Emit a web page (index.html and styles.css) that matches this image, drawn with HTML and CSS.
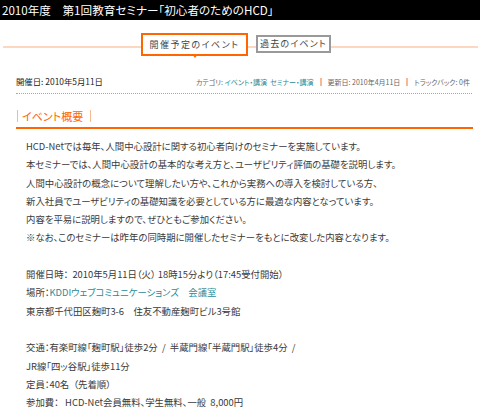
FILE: index.html
```html
<!DOCTYPE html>
<html lang="ja">
<head>
<meta charset="utf-8">
<title>2010年度 第1回教育セミナー「初心者のためのHCD」</title>
<link rel="stylesheet" href="styles.css">
</head>
<body>
<div class="title">2010年度　第1回教育セミナー「初心者のためのHCD」</div>
<div class="tabs">
  <div class="tab tab-active">開催予定のイベント</div>
  <div class="tab tab-past">過去のイベント</div>
</div>
<div class="meta">
  <span class="meta-date">開催日: 2010年5月11日</span>
  <span class="meta-info">カテゴリ: <a class="link">イベント・講演</a>&nbsp;&nbsp;<a class="link">セミナー・講演</a><span class="sep"></span>更新日: 2010年4月11日<span class="sep"></span>トラックバック: 0件</span>
</div>
<h2 class="heading"><span class="heading-text">イベント概要</span></h2>
<div class="content">
  <p class="para">HCD-Netでは毎年、人間中心設計に関する初心者向けのセミナーを実施しています。<br>本セミナーでは、人間中心設計の基本的な考え方と、ユーザビリティ評価の基礎を説明します。<br>人間中心設計の概念について理解したい方や、これから実務への導入を検討している方、<br>新入社員でユーザビリティの基礎知識を必要としている方に最適な内容となっています。<br>内容を平易に説明しますので、ぜひともご参加ください。<br>※なお、このセミナーは昨年の同時期に開催したセミナーをもとに改変した内容となります。</p>
  <p class="para">開催日時：&nbsp;&nbsp;2010年5月11日（火）&nbsp;18時15分より（17:45受付開始）<br>場所：<a class="link">KDDIウェブコミュニケーションズ　会議室</a><br>東京都千代田区麹町3-6　住友不動産麹町ビル3号館</p>
  <p class="para">交通：有楽町線「麹町駅」徒歩2分&nbsp;&nbsp;/&nbsp;&nbsp;半蔵門線「半蔵門駅」徒歩4分&nbsp;&nbsp;/<br>JR線「四ッ谷駅」徒歩11分<br>定員：40名&nbsp;&nbsp;（先着順）<br>参加費：&nbsp;&nbsp;&nbsp;HCD-Net会員無料、学生無料、一般&nbsp;&nbsp;8,000円</p>
</div>
</body>
</html>
```

FILE: styles.css
```css
* { box-sizing: border-box; }
html, body { margin: 0; padding: 0; background: #fff; }
body {
  font-family: "Noto Sans CJK JP", "Noto Sans", sans-serif;
  font-feature-settings: "palt";
  color: #333;
}
.title {
  background: #000;
  color: #fff;
  height: 20px;
  line-height: 20px;
  font-size: 11.6px;
  padding-left: 2px;
  white-space: nowrap;
  overflow: hidden;
}
.tabs {
  height: 44px;
  display: flex;
  align-items: center;
  gap: 8px;
  padding-left: 141px;
  padding-top: 4px;
  background: linear-gradient(#fcd8c0, #fcd8c0) no-repeat;
  background-size: 475px 2px;
  background-position: 3px 26px;
}
.tab {
  background: #fff;
  text-align: center;
  color: #444;
  font-size: 9px;
  letter-spacing: 1.5px;
  white-space: nowrap;
}
.tab-active {
  position: relative;
  width: 107px;
  height: 23px;
  line-height: 19px;
  border: 2px solid #f60;
}
.tab-active::after {
  content: "";
  position: absolute;
  left: 50%;
  top: 100%;
  margin-left: -3px;
  border-left: 3px solid transparent;
  border-right: 3px solid transparent;
  border-top: 4px solid #f60;
}
.tab-past {
  width: 75px;
  height: 18px;
  line-height: 14px;
  border: 2px solid #999;
  letter-spacing: 1.2px;
}
.meta {
  margin: 0 8px 0 16px;
  display: flex;
  justify-content: space-between;
  align-items: baseline;
  padding: 11px 0 5px;
  border-bottom: 1px dotted #aaa;
  line-height: 12px;
}
.meta-date {
  font-size: 8.4px;
  color: #222;
}
.meta-info {
  font-size: 7px;
  color: #666;
  padding-right: 2px;
}
.link { color: #2a8a98; text-decoration: none; }
.sep {
  display: inline-block;
  width: 2px;
  height: 8px;
  background: #fbb88f;
  margin: 0 6px;
  vertical-align: -1px;
}
.heading {
  margin: 0 7px 0 16px;
  padding: 16px 0 5px;
  border-bottom: 2px solid #f60;
  font-weight: normal;
  line-height: 12px;
  font-size: 11px;
}
.heading-text {
  display: inline-block;
  color: #f60;
  margin-left: 1px;
  padding: 0 7px 0 4px;
  border-left: 1px solid #fbb88f;
  border-right: 1px solid #fbb88f;
}
.content {
  padding: 8px 0 0 26px;
  font-size: 9.4px;
  line-height: 18.3px;
  color: #3a3a3a;
}
.para { margin: 0 0 18.3px; white-space: nowrap; }
```
